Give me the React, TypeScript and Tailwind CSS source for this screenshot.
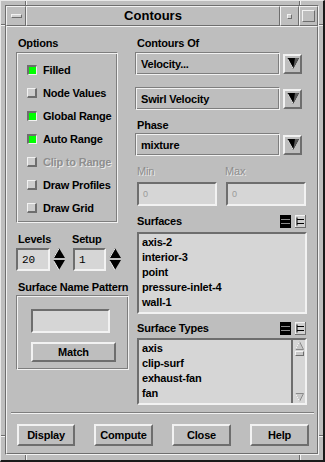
import React from 'react';

const raised =
  'border-2 border-t-[#f2f2f2] border-l-[#f2f2f2] border-r-[#6e6e6e] border-b-[#6e6e6e]';
const sunken =
  'border-2 border-t-[#6e6e6e] border-l-[#6e6e6e] border-r-[#f2f2f2] border-b-[#f2f2f2]';
const etched =
  'border border-t-[#7e7e7e] border-l-[#7e7e7e] border-r-[#f2f2f2] border-b-[#f2f2f2] shadow-[inset_1px_1px_0_#f2f2f2,inset_-1px_-1px_0_#7e7e7e]';

function Box({ on }: { on: boolean }) {
  if (on)
    return (
      <span className="w-[10px] h-[10px] shrink-0 bg-[#00ff00] border-t-2 border-l-2 border-b border-r border-t-[#6e6e6e] border-l-[#6e6e6e] border-b-[#f2f2f2] border-r-[#f2f2f2]" />
    );
  return (
    <span className="w-[10px] h-[10px] shrink-0 bg-[#cdcdcd] border-t border-l border-b-2 border-r-2 border-t-[#f2f2f2] border-l-[#f2f2f2] border-b-[#6e6e6e] border-r-[#6e6e6e]" />
  );
}

function Option({ label, on = false, disabled = false }: { label: string; on?: boolean; disabled?: boolean }) {
  return (
    <div className="h-[23px] flex items-center gap-[6px] whitespace-nowrap">
      <Box on={on} />
      <span
        className={
          disabled
            ? 'text-[#8e8e8e] [text-shadow:1px_1px_0_#e8e8e8] font-bold'
            : 'text-black font-bold'
        }
      >
        {label}
      </span>
    </div>
  );
}

function DownArrow() {
  return (
    <svg width="12" height="11" viewBox="0 0 12 11">
      <polygon points="0,0 12,0 6,11" fill="#000" />
      <polygon points="8,0 12,0 6,11 7,6" fill="#5a5a5a" />
      <line x1="0.5" y1="0.5" x2="6" y2="10.5" stroke="#e8e8e8" strokeWidth="1" />
    </svg>
  );
}

function Dropdown({ value }: { value: string }) {
  return (
    <div className="flex items-center gap-[3px]">
      <div className={`w-[145px] h-[23px] flex items-center pl-[5px] font-bold ${etched}`}>{value}</div>
      <div className={`w-[19px] h-[20px] flex items-center justify-center ${raised}`}>
        <DownArrow />
      </div>
    </div>
  );
}

function Spinner() {
  return (
    <svg width="12" height="23" viewBox="0 0 12 23">
      <polygon points="6,0 12,10 0,10" fill="#000" />
      <line x1="6" y1="0.5" x2="0.5" y2="10" stroke="#f2f2f2" />
      <polygon points="0,12 12,12 6,22" fill="#000" />
      <line x1="0.5" y1="12.5" x2="6" y2="22" stroke="#f2f2f2" />
    </svg>
  );
}

function SelectAllIcon() {
  return (
    <svg width="11" height="13" viewBox="0 0 11 13">
      <rect x="0" y="0" width="11" height="13" fill="#000" />
      <line x1="1" y1="4.5" x2="10" y2="4.5" stroke="#8a8a8a" />
      <line x1="1" y1="8.5" x2="10" y2="8.5" stroke="#8a8a8a" />
    </svg>
  );
}

function ClearIcon() {
  return (
    <svg width="11" height="13" viewBox="0 0 11 13">
      <rect x="0.5" y="0.5" width="10" height="12" fill="#d0d0d0" stroke="#f2f2f2" />
      <line x1="10.5" y1="0" x2="10.5" y2="13" stroke="#6e6e6e" />
      <line x1="0" y1="12.5" x2="11" y2="12.5" stroke="#6e6e6e" />
      <line x1="2" y1="4.5" x2="9" y2="4.5" stroke="#000" />
      <line x1="2" y1="8.5" x2="9" y2="8.5" stroke="#000" />
      <line x1="2" y1="2.5" x2="2" y2="10.5" stroke="#000" />
    </svg>
  );
}

function ListHeader({ title }: { title: string }) {
  return (
    <div className="h-[14px] flex items-center justify-between pr-[1px]">
      <span className="pl-[2px] font-bold">{title}</span>
      <div className="flex items-center gap-[4px]">
        <SelectAllIcon />
        <ClearIcon />
      </div>
    </div>
  );
}

function Button({ label, w }: { label: string; w: string }) {
  return (
    <div className={`${w} h-[22px] flex items-center justify-center font-bold ${raised}`}>{label}</div>
  );
}

function Tick({ className }: { className: string }) {
  return <span className={`absolute ${className}`} />;
}

export default function App() {
  return (
    <div className="w-[325px] h-[462px] relative bg-[#bebebe] border-t border-l border-r-2 border-b-2 border-t-[#e8e8e8] border-l-[#e8e8e8] border-r-[#1a1a1a] border-b-[#1a1a1a] text-[11px] tracking-[-0.2px] leading-[14px] text-black font-['Liberation_Sans',Arial,sans-serif] select-none">
      {/* frame corner marks */}
      <Tick className="top-0 left-[24px] w-[2px] h-[5px] border-l border-r border-l-[#6e6e6e] border-r-[#f2f2f2]" />
      <Tick className="top-0 left-[298px] w-[2px] h-[5px] border-l border-r border-l-[#6e6e6e] border-r-[#f2f2f2]" />
      <Tick className="bottom-0 left-[24px] w-[2px] h-[6px] border-l border-r border-l-[#6e6e6e] border-r-[#f2f2f2]" />
      <Tick className="bottom-0 left-[298px] w-[2px] h-[6px] border-l border-r border-l-[#6e6e6e] border-r-[#f2f2f2]" />
      <Tick className="left-0 top-[23px] h-[2px] w-[4px] border-t border-b border-t-[#6e6e6e] border-b-[#f2f2f2]" />
      <Tick className="right-0 top-[23px] h-[2px] w-[4px] border-t border-b border-t-[#6e6e6e] border-b-[#f2f2f2]" />
      <Tick className="left-0 bottom-[23px] h-[2px] w-[4px] border-t border-b border-t-[#6e6e6e] border-b-[#f2f2f2]" />
      <Tick className="right-0 bottom-[23px] h-[2px] w-[4px] border-t border-b border-t-[#6e6e6e] border-b-[#f2f2f2]" />

      <div className="absolute left-[4px] top-[4px] w-[314px] h-[450px] flex flex-col border-t border-l border-b border-r border-t-[#6e6e6e] border-l-[#6e6e6e] border-b-[#f2f2f2] border-r-[#f2f2f2]">
        {/* title bar */}
        <div className="h-[20px] flex shrink-0">
          <div className="w-[20px] flex items-center justify-center border border-t-[#f2f2f2] border-l-[#f2f2f2] border-b-[#6e6e6e] border-r-[#6e6e6e]">
            <span className="w-[11px] h-[4px] bg-[#d0d0d0] border border-t-[#f2f2f2] border-l-[#f2f2f2] border-b-[#6e6e6e] border-r-[#6e6e6e]" />
          </div>
          <div className="flex-1 flex items-center justify-center font-bold text-[13px] tracking-normal border border-t-[#f2f2f2] border-l-[#f2f2f2] border-b-[#6e6e6e] border-r-[#6e6e6e]">
            Contours
          </div>
          <div className="w-[19px] flex items-center justify-center border border-t-[#f2f2f2] border-l-[#f2f2f2] border-b-[#6e6e6e] border-r-[#6e6e6e]">
            <span className="w-[5px] h-[5px] bg-[#d0d0d0] border border-t-[#f2f2f2] border-l-[#f2f2f2] border-b-[#6e6e6e] border-r-[#6e6e6e]" />
          </div>
          <div className="w-[19px] flex items-center justify-center border border-t-[#f2f2f2] border-l-[#f2f2f2] border-b-[#6e6e6e] border-r-[#6e6e6e]">
            <span className="w-[13px] h-[12px] border border-t-[#f2f2f2] border-l-[#f2f2f2] border-b-[#6e6e6e] border-r-[#6e6e6e]" />
          </div>
        </div>

        {/* body */}
        <div className="flex-1 flex flex-col border border-t-[#f2f2f2] border-l-[#f2f2f2] border-b-[#6e6e6e] border-r-[#6e6e6e]">
          <div className="flex pl-[9px] pt-[9px] gap-[6px]">
            {/* left column */}
            <div className="w-[113px] flex flex-col">
              <div className="h-[14px] pl-[2px] font-bold">Options</div>
              <div className={`mt-[2px] w-[102px] h-[171px] pl-[10px] pt-[5px] ${etched}`}>
                <Option label="Filled" on />
                <Option label="Node Values" />
                <Option label="Global Range" on />
                <Option label="Auto Range" on />
                <Option label="Clip to Range" disabled />
                <Option label="Draw Profiles" />
                <Option label="Draw Grid" />
              </div>

              <div className="mt-[9px] h-[14px] flex font-bold">
                <span className="w-[56px] pl-[2px]">Levels</span>
                <span>Setup</span>
              </div>
              <div className="mt-[2px] flex items-center">
                <div className={`w-[34px] h-[23px] bg-[#d6d6d6] flex items-center pl-[4px] font-['Liberation_Mono',monospace] text-[11px] tracking-normal ${sunken}`}>
                  20
                </div>
                <div className="ml-[3px]">
                  <Spinner />
                </div>
                <div className={`ml-[8px] w-[33px] h-[23px] bg-[#d6d6d6] flex items-center pl-[4px] font-['Liberation_Mono',monospace] text-[11px] tracking-normal ${sunken}`}>
                  1
                </div>
                <div className="ml-[3px]">
                  <Spinner />
                </div>
              </div>

              <div className="mt-[9px] h-[14px] pl-[2px] font-bold whitespace-nowrap">Surface Name Pattern</div>
              <div className={`mt-[1px] w-[113px] h-[75px] pl-[14px] pt-[13px] flex flex-col gap-[9px] ${etched}`}>
                <div className={`w-[79px] h-[24px] bg-[#d6d6d6] ${sunken}`} />
                <div className={`w-[85px] h-[20px] flex items-center justify-center font-bold ${raised}`}>Match</div>
              </div>
            </div>

            {/* right column */}
            <div className="w-[172px] flex flex-col">
              <div className="h-[14px] pl-[2px] font-bold">Contours Of</div>
              <div className="mt-[2px]">
                <Dropdown value="Velocity..." />
              </div>
              <div className="mt-[12px]">
                <Dropdown value="Swirl Velocity" />
              </div>
              <div className="mt-[8px] h-[14px] pl-[2px] font-bold">Phase</div>
              <div className="mt-[1px]">
                <Dropdown value="mixture" />
              </div>

              <div className="mt-[8px] h-[14px] flex text-[#8e8e8e] [text-shadow:1px_1px_0_#e8e8e8] text-[11px]">
                <span className="w-[90px] pl-[2px]">Min</span>
                <span>Max</span>
              </div>
              <div className="mt-[4px] flex gap-[9px] pl-[2px]">
                <div className={`w-[80px] h-[24px] bg-[#d6d6d6] flex items-center pl-[4px] text-[9px] text-[#9a9a9a] ${sunken}`}>0</div>
                <div className={`w-[80px] h-[24px] bg-[#d6d6d6] flex items-center pl-[4px] text-[9px] text-[#9a9a9a] ${sunken}`}>0</div>
              </div>

              <div className="mt-[8px]">
                <ListHeader title="Surfaces" />
              </div>
              <div className={`mt-[4px] ml-[2px] w-[170px] h-[82px] bg-[#d6d6d6] pl-[3px] pt-[1px] font-bold leading-[15px] ${sunken}`}>
                <div>axis-2</div>
                <div>interior-3</div>
                <div>point</div>
                <div>pressure-inlet-4</div>
                <div>wall-1</div>
              </div>

              <div className="mt-[7px]">
                <ListHeader title="Surface Types" />
              </div>
              <div className={`mt-[3px] ml-[2px] w-[170px] h-[67px] bg-[#d6d6d6] flex ${sunken}`}>
                <div className="flex-1 pl-[3px] pt-[1px] font-bold leading-[15px]">
                  <div>axis</div>
                  <div>clip-surf</div>
                  <div>exhaust-fan</div>
                  <div>fan</div>
                </div>
                <div className="w-[14px] border-l-2 border-l-[#6e6e6e] flex flex-col items-center justify-between py-[1px]">
                  <div className="flex flex-col items-center gap-[1px]">
                    <svg width="9" height="9" viewBox="0 0 9 9">
                      <polygon points="4.5,0.5 8.5,8.5 0.5,8.5" fill="#c8c8c8" stroke="#8a8a8a" />
                      <line x1="4.5" y1="0.5" x2="0.5" y2="8.5" stroke="#f2f2f2" />
                    </svg>
                    <span className="w-[9px] h-[5px] bg-[#c8c8c8] border border-t-[#f2f2f2] border-l-[#f2f2f2] border-b-[#6e6e6e] border-r-[#6e6e6e]" />
                  </div>
                  <svg width="9" height="9" viewBox="0 0 9 9">
                    <polygon points="0.5,0.5 8.5,0.5 4.5,8.5" fill="#c8c8c8" stroke="#8a8a8a" />
                    <line x1="0.5" y1="0.5" x2="4.5" y2="8.5" stroke="#f2f2f2" />
                  </svg>
                </div>
              </div>
            </div>
          </div>

          {/* separator */}
          <div className="mt-[7px] ml-[4px] mr-[3px] h-[2px] border-t border-b border-t-[#7e7e7e] border-b-[#f2f2f2]" />

          {/* buttons */}
          <div className="mt-[10px] pl-[10px] pr-[8px] flex justify-between">
            <Button label="Display" w="w-[58px]" />
            <Button label="Compute" w="w-[59px]" />
            <Button label="Close" w="w-[59px]" />
            <Button label="Help" w="w-[59px]" />
          </div>
        </div>
      </div>
    </div>
  );
}
